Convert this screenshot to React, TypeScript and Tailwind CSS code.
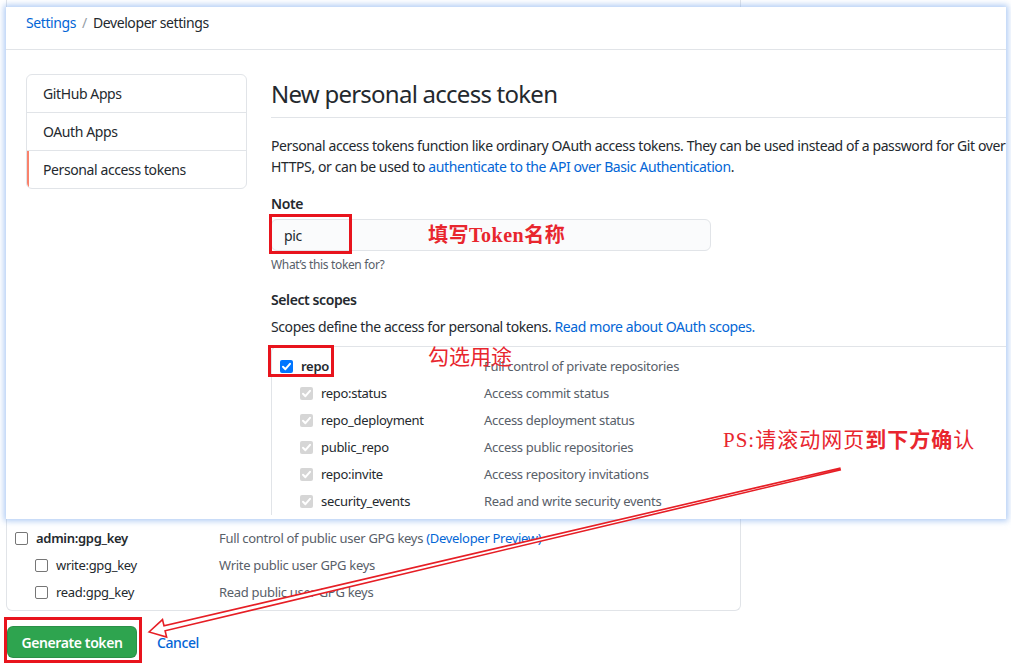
import React from "react";

const Check = ({ color = "white" }: { color?: string }) => (
  <svg width="13" height="13" viewBox="0 0 13 13">
    <path d="M3 6.8 5.4 9.2 10 3.8" fill="none" stroke={color} strokeWidth="2" strokeLinecap="round" strokeLinejoin="round" />
  </svg>
);

function Box({ state }: { state: "checked" | "disabled" | "empty" }) {
  if (state === "checked")
    return (
      <span className="flex h-[13px] w-[13px] shrink-0 items-center justify-center rounded-[2px] bg-[#0075ff]">
        <Check />
      </span>
    );
  if (state === "disabled")
    return (
      <span className="flex h-[13px] w-[13px] shrink-0 items-center justify-center rounded-[2px] bg-[#d6d6d6]">
        <Check />
      </span>
    );
  return <span className="h-[13px] w-[13px] shrink-0 rounded-[2px] border border-[#767676] bg-white" />;
}

function ScopeRow({
  name,
  desc,
  state,
  sub,
  bold,
}: {
  name: string;
  desc: React.ReactNode;
  state: "checked" | "disabled" | "empty";
  sub?: boolean;
  bold?: boolean;
}) {
  return (
    <div className="flex h-[27px] items-center whitespace-nowrap text-[13px] tracking-[-0.3px]">
      <div className={"flex w-[204px] shrink-0 items-center " + (sub ? "pl-[20px]" : "")}>
        <Box state={state} />
        <span className={"ml-[8px] text-[#24292e] " + (bold ? "font-semibold" : "")}>{name}</span>
      </div>
      <span className="text-[#586069]">{desc}</span>
    </div>
  );
}

export default function App() {
  return (
    <div className="relative h-[671px] w-[1011px] overflow-hidden bg-white font-['Noto_Sans',sans-serif] text-[14px] leading-[21px] tracking-[-0.4px] text-[#24292e]">
      {/* page behind */}
      <div className="pl-[6px]">
        <div className="flex h-[611px] w-[735px] flex-col justify-end rounded-b-md border-x border-b border-[#e1e4e8] pb-[4px] pl-[8px]">
          <ScopeRow
            name="admin:gpg_key"
            bold
            state="empty"
            desc={
              <>
                Full control of public user GPG keys <span className="text-[#0366d6]">(Developer Preview)</span>
              </>
            }
          />
          <ScopeRow name="write:gpg_key" sub state="empty" desc="Write public user GPG keys" />
          <ScopeRow name="read:gpg_key" sub state="empty" desc="Read public user GPG keys" />
        </div>
      </div>
      <div className="mt-[15px] flex items-center pl-[7px]">
        <button className="h-[32px] w-[130px] rounded-md border border-[rgba(27,31,35,0.15)] bg-[#2ea44f] font-semibold text-white">
          Generate token
        </button>
        <span className="ml-[20px] font-medium text-[#0366d6]">Cancel</span>
      </div>

      {/* screenshot window on top */}
      <div className="absolute left-[6px] top-[7px] h-[512px] w-[1000px] overflow-hidden bg-white shadow-[0_0_6px_2px_rgba(110,160,235,0.55)]">
        <div className="h-[43px] border-b border-[#e1e4e8] pl-[20px] pt-[6px] leading-[20px]">
          <span className="text-[#0366d6]">Settings</span>
          <span className="mx-[6px] text-[#959da5]">/</span>
          <span>Developer settings</span>
        </div>
        <div className="flex pl-[20px] pt-[24px]">
          <div className="h-[115px] w-[221px] shrink-0 self-start overflow-hidden rounded-md border border-[#e1e4e8]">
            <div className="flex h-[38px] items-center border-b border-[#e1e4e8] pl-[16px]">GitHub Apps</div>
            <div className="flex h-[38px] items-center border-b border-[#e1e4e8] pl-[16px]">OAuth Apps</div>
            <div className="flex h-[37px] items-center border-l-2 border-[#f9826c] pl-[14px]">Personal access tokens</div>
          </div>
          <div className="ml-[24px] flex-1">
            <div className="border-b border-[#e1e4e8] pb-[8px] pt-[5px] text-[24px] leading-[30px] tracking-[-0.75px]">
              New personal access token
            </div>
            <div className="mt-[17px] whitespace-nowrap">
              <div>
                Personal access tokens function like ordinary OAuth access tokens. They can be used instead of a password for Git over
              </div>
              <div>
                HTTPS, or can be used to <span className="text-[#0366d6]">authenticate to the API over Basic Authentication</span>.
              </div>
            </div>
            <div className="mt-[16px] font-semibold">Note</div>
            <div className="mt-[5px] flex h-[32px] w-[440px] items-center rounded-md border border-[#e1e4e8] bg-[#fafbfc] pl-[12px]">
              pic
            </div>
            <div className="mt-[5px] text-[12px] leading-[18px] tracking-[-0.35px] text-[#586069]">What’s this token for?</div>
            <div className="mt-[15px] font-semibold">Select scopes</div>
            <div className="mt-[6px]">
              Scopes define the access for personal tokens.{" "}
              <span className="text-[#0366d6]">Read more about OAuth scopes.</span>
            </div>
            <div className="mt-[9px] rounded-tl-md border-l border-t border-[#e1e4e8] pl-[8px] pt-[6px]">
              <ScopeRow name="repo" bold state="checked" desc="Full control of private repositories" />
              <ScopeRow name="repo:status" sub state="disabled" desc="Access commit status" />
              <ScopeRow name="repo_deployment" sub state="disabled" desc="Access deployment status" />
              <ScopeRow name="public_repo" sub state="disabled" desc="Access public repositories" />
              <ScopeRow name="repo:invite" sub state="disabled" desc="Access repository invitations" />
              <ScopeRow name="security_events" sub state="disabled" desc="Read and write security events" />
            </div>
          </div>
        </div>
      </div>

      {/* annotations */}
      <div className="absolute left-[269px] top-[214px] h-[40px] w-[83px] border-[3px] border-[#e8141d]" />
      <div className="absolute left-[268px] top-[345px] h-[32px] w-[66px] border-[3px] border-[#e8141d]" />
      <div className="absolute left-[4px] top-[617px] h-[46px] w-[138px] border-[3px] border-[#e8141d]" />

      <div className="absolute left-[428px] top-[222px] whitespace-nowrap font-['Liberation_Serif','Noto_Sans_CJK_SC',serif] text-[20px] font-bold leading-[26px] tracking-[0.5px] text-[#e8262e]">
        填写Token名称
      </div>
      <div className="absolute left-[428px] top-[341px] whitespace-nowrap font-['Noto_Sans_CJK_SC',sans-serif] text-[21px] leading-[28px] tracking-normal text-[#e8262e]">
        勾选用途
      </div>
      <div className="absolute left-[723px] top-[427px] whitespace-nowrap font-['Liberation_Serif','Noto_Sans_CJK_SC',serif] text-[21px] leading-[26px] tracking-[1px] text-[#e8262e]">
        PS:请滚动网页<span className="font-bold">到下方确</span>认
      </div>

      <svg className="pointer-events-none absolute left-0 top-0" width="1011" height="671" viewBox="0 0 1011 671">
        <polygon
          points="149,632 162.5,619.6 164,625.9 839.8,468.2 840.2,469.8 165.1,630.8 166.6,637.1"
          fill="white"
          stroke="#e61e25"
          strokeWidth="1.6"
          strokeLinejoin="miter"
        />
      </svg>
    </div>
  );
}
